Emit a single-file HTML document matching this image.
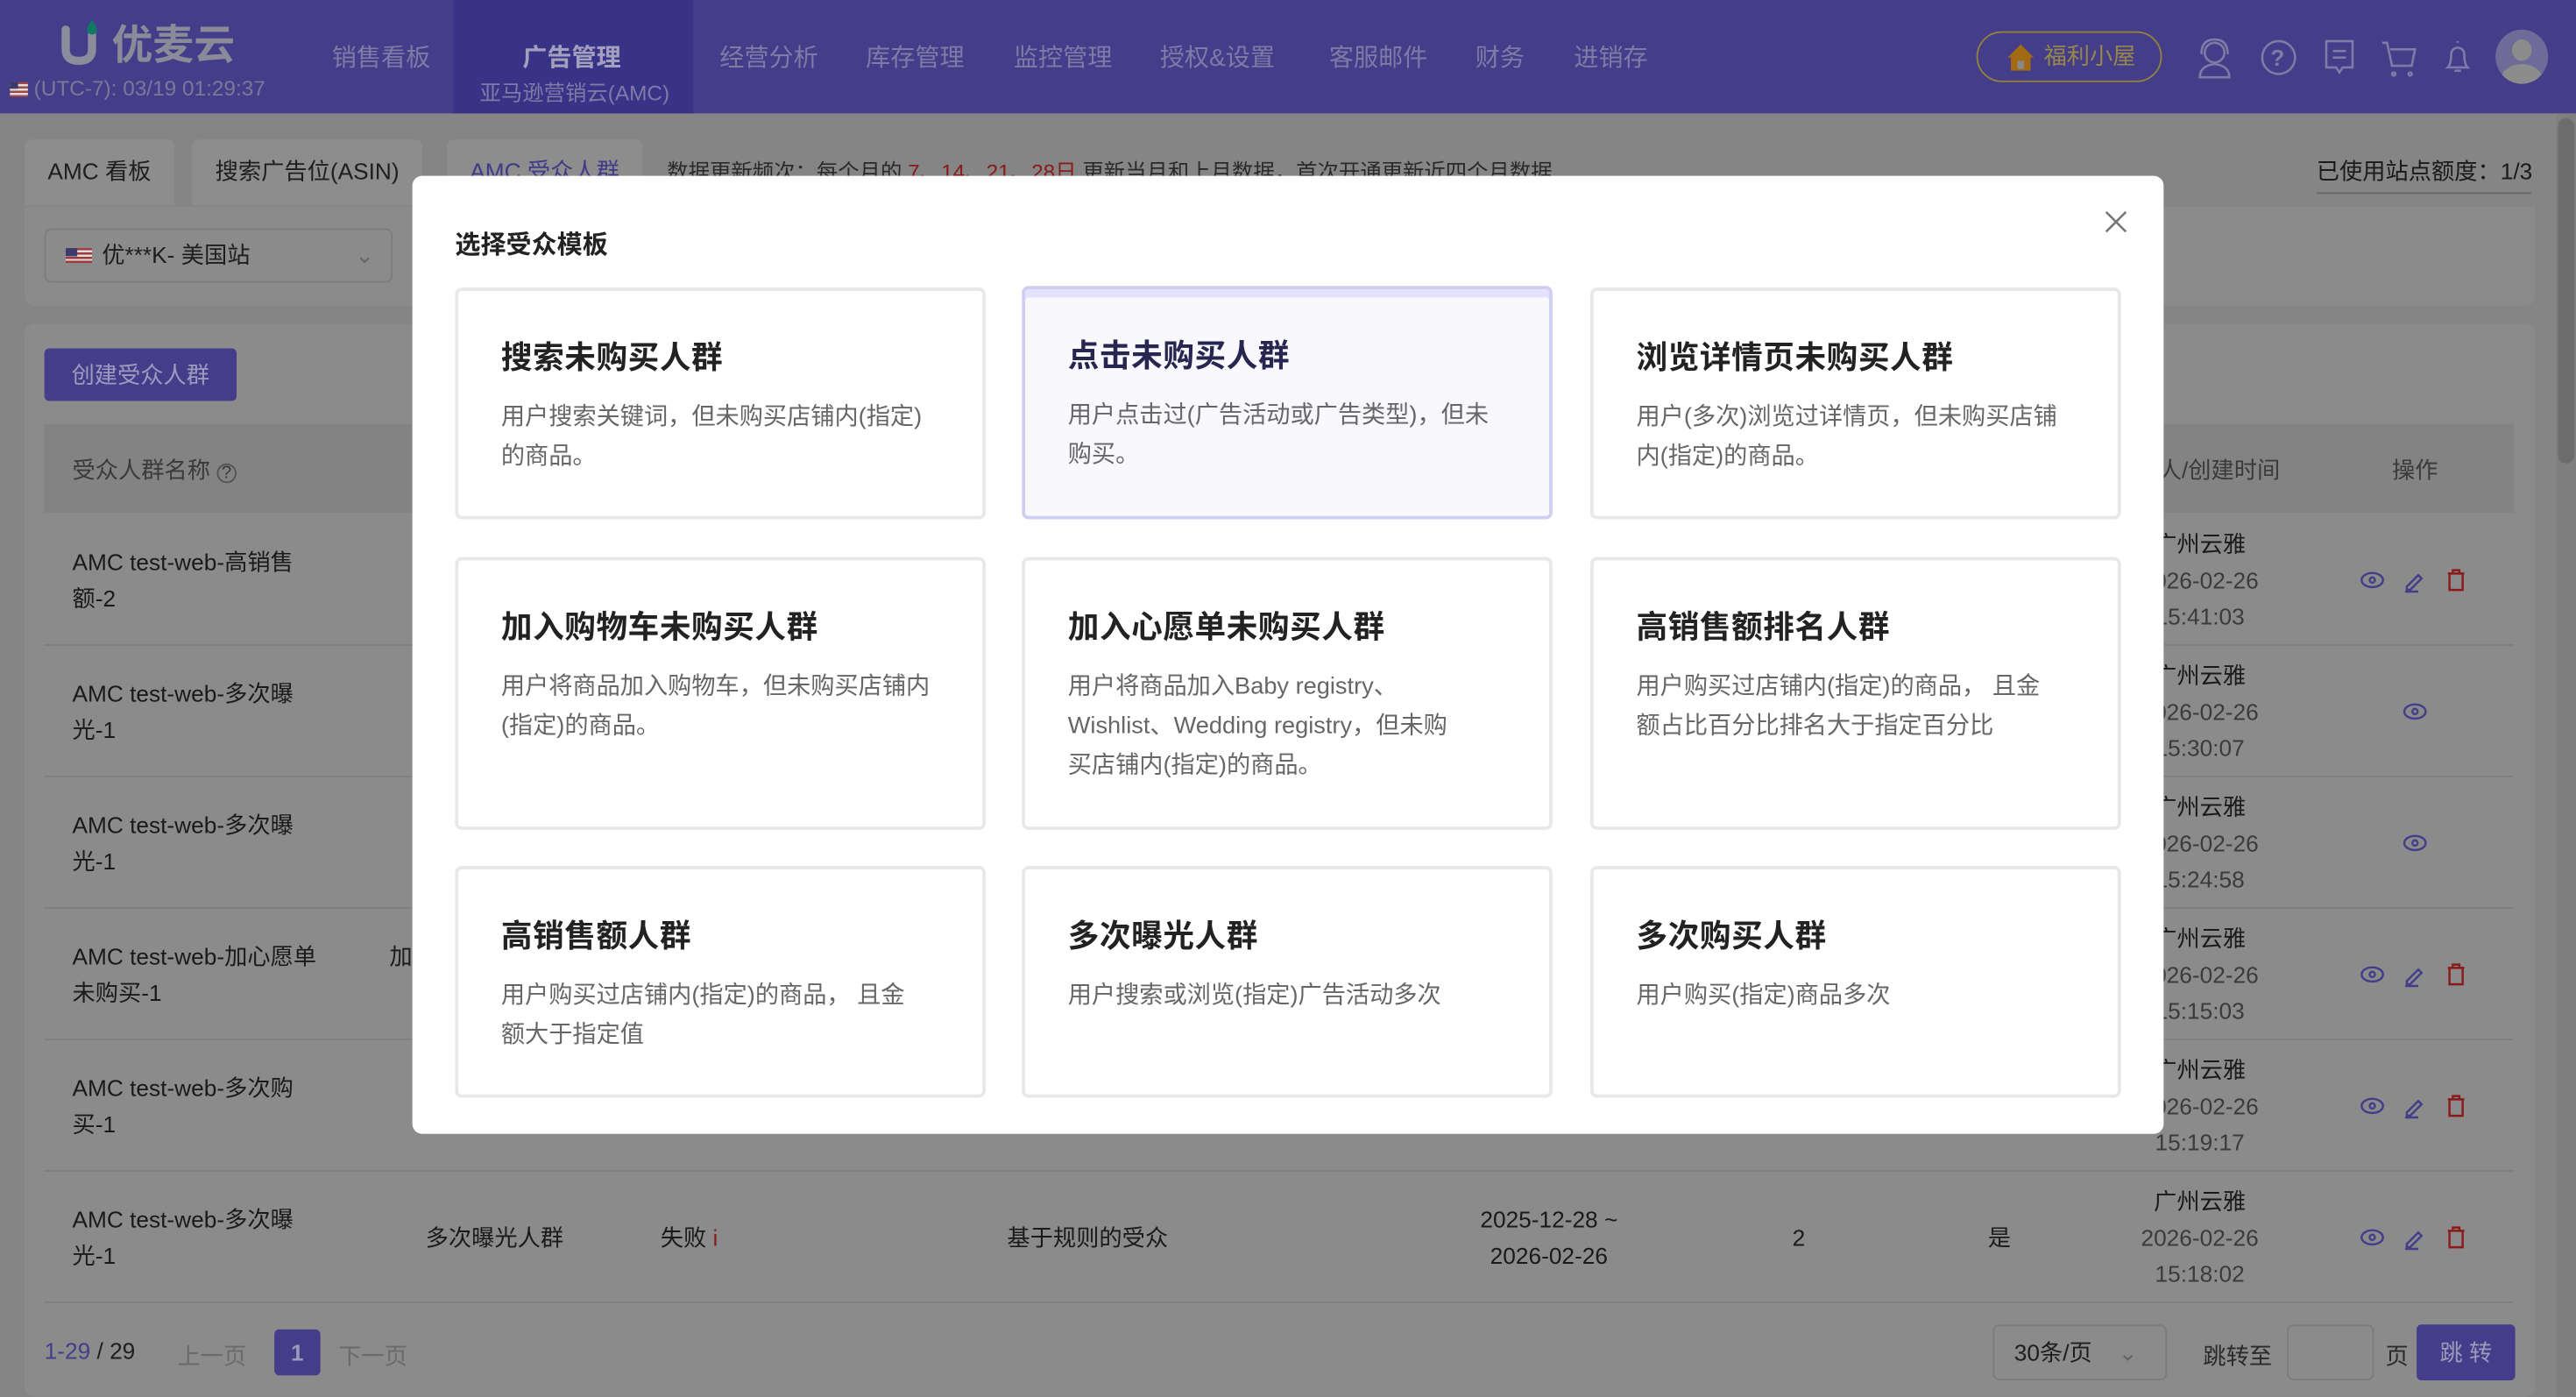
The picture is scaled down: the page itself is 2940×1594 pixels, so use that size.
<!DOCTYPE html>
<html><head><meta charset="utf-8"><style>
*{margin:0;padding:0;box-sizing:border-box}
html,body{width:2940px;height:1594px;overflow:hidden;background:#858585}
#w{position:absolute;left:0;top:0;width:1568px;height:850px;transform:scale(1.875);transform-origin:0 0;font-family:"Liberation Sans","Noto Sans CJK SC",sans-serif;color:#1e1e1e}
.a{position:absolute}
.hd{left:0;top:0;width:1568px;height:69px;background:#433d8a}
.nav{top:24px;font-size:15px;color:#7f7aa6}
.tab{top:85px;height:40px;background:#8d8d8d;border-radius:4px 4px 0 0;font-size:14px;line-height:38px;padding:0 14px;color:#1e1e1e}
.panel{background:#8b8b8b;border-radius:6px}
.row{left:27px;width:1503px;height:80px;border-bottom:1px solid #7f7f7f}
.nm{font-size:14px;line-height:22px;color:#1a1a1a}
.rt{font-size:14px;line-height:22px;color:#1a1a1a;text-align:center;width:80px}
.rt span{color:#3b3b3b}
.modal{left:251px;top:107px;width:1066px;height:583px;background:#fff;border-radius:6px}
.card{width:323px;border:2px solid #e8e8e8;border-radius:4px;background:#fff;padding:25px 26px 0}
.card h3{font-size:19px;font-weight:bold;color:#222;margin-top:1px;letter-spacing:.3px}
.card p{font-size:14.5px;color:#666;line-height:24px;margin-top:12px;white-space:nowrap}
.sel{background:#f8f8fd;border-color:#cfcdf0;box-shadow:inset 0 5px 0 #e3e1fb}
.sel h3{color:#262650}
</style></head><body><div id="w">
<div class="a hd"></div>
<div class="a" style="left:276px;top:0;width:146px;height:69px;background:#393388"></div>
<svg class="a" style="left:36px;top:10px" width="28" height="30" viewBox="0 0 28 30"><path d="M4 8v12q0 7 8 7t8-7v-9" fill="none" stroke="#8c8c9c" stroke-width="5" stroke-linecap="round"/><path d="M20 2q3 4 3 6a3 3 0 0 1-6 0q0-2 3-6z" fill="#0e7a63"/></svg>
<div class="a" style="left:68px;top:8px;font-size:25px;font-weight:bold;color:#8a8a98">优麦云</div>
<div class="a" style="left:6px;top:46px;font-size:13px;color:#7c7898"><span style="display:inline-block;width:11px;height:9px;background:repeating-linear-gradient(#a04848 0 1.3px,#ddd 1.3px 2.6px);vertical-align:-1px;position:relative"><i style="position:absolute;left:0;top:0;width:5px;height:4px;background:#3c3c6c"></i></span> (UTC-7): 03/19 01:29:37</div>
<div class="a nav" style="left:202px">销售看板</div>
<div class="a nav" style="left:318px;top:24px;color:#a3a0bd;font-weight:bold">广告管理</div>
<div class="a" style="left:292px;top:46px;font-size:13px;color:#7f7aa6">亚马逊营销云(AMC)</div>
<div class="a nav" style="left:438px">经营分析</div>
<div class="a nav" style="left:527px">库存管理</div>
<div class="a nav" style="left:617px">监控管理</div>
<div class="a nav" style="left:706px">授权&amp;设置</div>
<div class="a nav" style="left:809px">客服邮件</div>
<div class="a nav" style="left:898px">财务</div>
<div class="a nav" style="left:958px">进销存</div>
<div class="a" style="left:1203px;top:19px;width:113px;height:31px;border:1.3px solid #93803f;border-radius:16px;color:#98874a;font-size:14px;line-height:29px;padding-left:40px">福利小屋</div>
<svg class="a" style="left:1220px;top:25px" width="20" height="20" viewBox="0 0 20 20"><path d="M2 10L10 2l8 8h-2v8H4v-8z" fill="#a36a14"/><rect x="8" y="12" width="4" height="5" fill="#888"/></svg>
<svg class="a" style="left:1336px;top:21px" width="172" height="28" viewBox="0 0 172 28" fill="none" stroke="#7f7aa6" stroke-width="1.4"><circle cx="12" cy="11" r="6"/><path d="M4 12q0-9 8-9t8 9M3 26q0-7 9-8q9 1 9 8z"/><circle cx="51" cy="14" r="10"/><text x="46" y="19" font-size="14" fill="#7f7aa6" stroke="none" font-family="Liberation Sans" font-weight="bold">?</text><path d="M80 4h16v16h-6l-2 3-2-3h-6zM84 10h8M84 14h8"/><path d="M114 5h3l3 14h12l2-10h-15M121 23a1 1 0 1 0 0.1 0M131 23a1 1 0 1 0 .1 0"/><path d="M166 20h-12q2-2 2-8a4 4 0 0 1 8 0q0 6 2 8zM158 22h4M160 4v1"/></svg>
<div class="a" style="left:1519px;top:18px;width:32px;height:33px;border-radius:50%;background:#6e6b98;overflow:hidden"><div class="a" style="left:10px;top:6px;width:12px;height:13px;border-radius:50%;background:#8c8c8c"></div><div class="a" style="left:3px;top:21px;width:26px;height:20px;border-radius:50%;background:#8c8c8c"></div></div>
<div class="a" style="left:1556px;top:69px;width:12px;height:781px;background:#7f7f7f"></div>
<div class="a" style="left:1557px;top:72px;width:10px;height:210px;border-radius:5px;background:#6c6c6c"></div>
<div class="a tab" style="left:15px">AMC 看板</div>
<div class="a tab" style="left:117px">搜索广告位(ASIN)</div>
<div class="a tab" style="left:272px;color:#3f3b86">AMC 受众人群</div>
<div class="a" style="left:406px;top:94px;font-size:13px;color:#2a2a2a">数据更新频次：每个月的 <span style="color:#8a1a1a">7、14、21、28日</span> 更新当月和上月数据，首次开通更新近四个月数据</div>
<div class="a" style="left:1410px;top:94px;font-size:14px;color:#1a1a1a;border-bottom:1px solid #6a6a6a;padding-bottom:3px">已使用站点额度：1/3</div>
<div class="a panel" style="left:15px;top:126px;width:1528px;height:60px;border-radius:0 0 6px 6px"></div>
<div class="a" style="left:27px;top:139px;width:212px;height:33px;border:1px solid #7c7c7c;border-radius:4px;font-size:14px;line-height:31px;padding-left:34px">优***K- 美国站<span class="a" style="left:188px;top:0;color:#666">⌄</span></div>
<div class="a" style="left:40px;top:151px;width:16px;height:9px;background:repeating-linear-gradient(#a03a3a 0 1.3px,#ddd 1.3px 2.6px)"><i class="a" style="left:0;top:0;width:7px;height:5px;background:#3c3c6c"></i></div>
<div class="a panel" style="left:15px;top:197px;width:1528px;height:653px"></div>
<div class="a" style="left:27px;top:212px;width:117px;height:32px;background:#433d8a;border-radius:3px;color:#9e9bbf;font-size:14px;line-height:32px;text-align:center">创建受众人群</div>
<div class="a" style="left:27px;top:258px;width:1503px;height:54px;background:#838383"></div>
<div class="a" style="left:44px;top:276px;font-size:14px;color:#3a3a3a">受众人群名称 <span style="font-size:11px;border:1px solid #555;border-radius:50%;display:inline-block;width:12px;height:12px;line-height:11px;text-align:center">?</span></div>
<div class="a" style="left:1314px;top:276px;font-size:14px;color:#3a3a3a">人/创建时间</div>
<div class="a" style="left:1456px;top:276px;font-size:14px;color:#3a3a3a">操作</div>
<div class="a row" style="top:313px"></div><div class="a row" style="top:393px"></div><div class="a row" style="top:473px"></div><div class="a row" style="top:553px"></div><div class="a row" style="top:633px"></div><div class="a row" style="top:713px"></div>
<div class="a nm" style="left:44px;top:331px">AMC test-web-高销售<br>额-2</div>
<div class="a nm" style="left:44px;top:411px">AMC test-web-多次曝<br>光-1</div>
<div class="a nm" style="left:44px;top:491px">AMC test-web-多次曝<br>光-1</div>
<div class="a nm" style="left:44px;top:571px">AMC test-web-加心愿单<br>未购买-1</div>
<div class="a nm" style="left:237px;top:571px">加</div>
<div class="a nm" style="left:44px;top:651px">AMC test-web-多次购<br>买-1</div>
<div class="a nm" style="left:44px;top:731px">AMC test-web-多次曝<br>光-1</div>
<div class="a nm" style="left:259px;top:742px">多次曝光人群</div>
<div class="a nm" style="left:402px;top:742px">失败 <span style="color:#8a1a1a">i</span></div>
<div class="a nm" style="left:613px;top:742px">基于规则的受众</div>
<div class="a nm" style="left:901px;top:731px;text-align:center">2025-12-28 ~<br>2026-02-26</div>
<div class="a nm" style="left:1091px;top:742px">2</div>
<div class="a nm" style="left:1210px;top:742px">是</div>
<div class="a rt" style="left:1299px;top:320px">广州云雅<br><span>2026-02-26<br>15:41:03</span></div>
<div class="a rt" style="left:1299px;top:400px">广州云雅<br><span>2026-02-26<br>15:30:07</span></div>
<div class="a rt" style="left:1299px;top:480px">广州云雅<br><span>2026-02-26<br>15:24:58</span></div>
<div class="a rt" style="left:1299px;top:560px">广州云雅<br><span>2026-02-26<br>15:15:03</span></div>
<div class="a rt" style="left:1299px;top:640px">广州云雅<br><span>2026-02-26<br>15:19:17</span></div>
<div class="a rt" style="left:1299px;top:720px">广州云雅<br><span>2026-02-26<br>15:18:02</span></div>
<svg class="a" style="left:1436px;top:340px" width="76" height="430" viewBox="0 0 76 430" fill="none" stroke-width="1.3">
<g id="e"><ellipse cx="8" cy="13" rx="6.5" ry="4.3" stroke="#433d8a"/><circle cx="8" cy="13" r="1.6" stroke="#433d8a"/><path d="M29 17l7-7 2 2-7 7h-2zM28 20h8" stroke="#433d8a"/><path d="M54 9h10M57 9v-2h4v2M55 9v10h8v-10" stroke="#8a1a1a"/></g>
<g transform="translate(26,80)"><ellipse cx="8" cy="13" rx="6.5" ry="4.3" stroke="#433d8a"/><circle cx="8" cy="13" r="1.6" stroke="#433d8a"/></g>
<g transform="translate(26,160)"><ellipse cx="8" cy="13" rx="6.5" ry="4.3" stroke="#433d8a"/><circle cx="8" cy="13" r="1.6" stroke="#433d8a"/></g>
<use href="#e" y="240"/><use href="#e" y="320"/><use href="#e" y="400"/>
</svg>
<div class="a" style="left:27px;top:814px;font-size:14px;color:#1e1e1e"><span style="color:#433d8a">1-29</span> / 29</div>
<div class="a" style="left:108px;top:815px;font-size:14px;color:#6a6a6a">上一页</div>
<div class="a" style="left:167px;top:809px;width:28px;height:28px;background:#433d8a;border-radius:3px;color:#9d9ab9;font-size:14px;font-weight:bold;line-height:28px;text-align:center">1</div>
<div class="a" style="left:206px;top:815px;font-size:14px;color:#6a6a6a">下一页</div>
<div class="a" style="left:1213px;top:806px;width:106px;height:34px;border:1px solid #7c7c7c;border-radius:4px;font-size:14px;line-height:32px;padding-left:12px">30条/页 <span style="color:#666;margin-left:12px">⌄</span></div>
<div class="a" style="left:1341px;top:815px;font-size:14px;color:#2a2a2a">跳转至</div>
<div class="a" style="left:1392px;top:806px;width:53px;height:34px;border:1px solid #7c7c7c;border-radius:4px"></div>
<div class="a" style="left:1452px;top:815px;font-size:14px;color:#2a2a2a">页</div>
<div class="a" style="left:1471px;top:806px;width:60px;height:34px;background:#433d8a;border-radius:3px;color:#9d9ab9;font-size:14px;line-height:34px;text-align:center">跳 转</div>
<div class="a modal">
<div class="a" style="left:26px;top:30px;font-size:15.5px;font-weight:bold;color:#222">选择受众模板</div>
<svg class="a" style="left:1030px;top:21px" width="14" height="14" viewBox="0 0 14 14"><path d="M1 1l12 12M13 1L1 13" stroke="#777" stroke-width="1.4"/></svg>
<div class="a card" style="left:26px;top:68px;height:141px"><h3>搜索未购买人群</h3><p>用户搜索关键词，但未购买店铺内(指定)<br>的商品。</p></div>
<div class="a card sel" style="left:371px;top:67px;height:142px"><h3>点击未购买人群</h3><p>用户点击过(广告活动或广告类型)，但未<br>购买。</p></div>
<div class="a card" style="left:717px;top:68px;height:141px"><h3>浏览详情页未购买人群</h3><p>用户(多次)浏览过详情页，但未购买店铺<br>内(指定)的商品。</p></div>
<div class="a card" style="left:26px;top:232px;height:166px"><h3>加入购物车未购买人群</h3><p>用户将商品加入购物车，但未购买店铺内<br>(指定)的商品。</p></div>
<div class="a card" style="left:371px;top:232px;height:166px"><h3>加入心愿单未购买人群</h3><p>用户将商品加入Baby registry、<br>Wishlist、Wedding registry，但未购<br>买店铺内(指定)的商品。</p></div>
<div class="a card" style="left:717px;top:232px;height:166px"><h3>高销售额排名人群</h3><p>用户购买过店铺内(指定)的商品， 且金<br>额占比百分比排名大于指定百分比</p></div>
<div class="a card" style="left:26px;top:420px;height:141px"><h3>高销售额人群</h3><p>用户购买过店铺内(指定)的商品， 且金<br>额大于指定值</p></div>
<div class="a card" style="left:371px;top:420px;height:141px"><h3>多次曝光人群</h3><p>用户搜索或浏览(指定)广告活动多次</p></div>
<div class="a card" style="left:717px;top:420px;height:141px"><h3>多次购买人群</h3><p>用户购买(指定)商品多次</p></div>
</div>
</div></body></html>
